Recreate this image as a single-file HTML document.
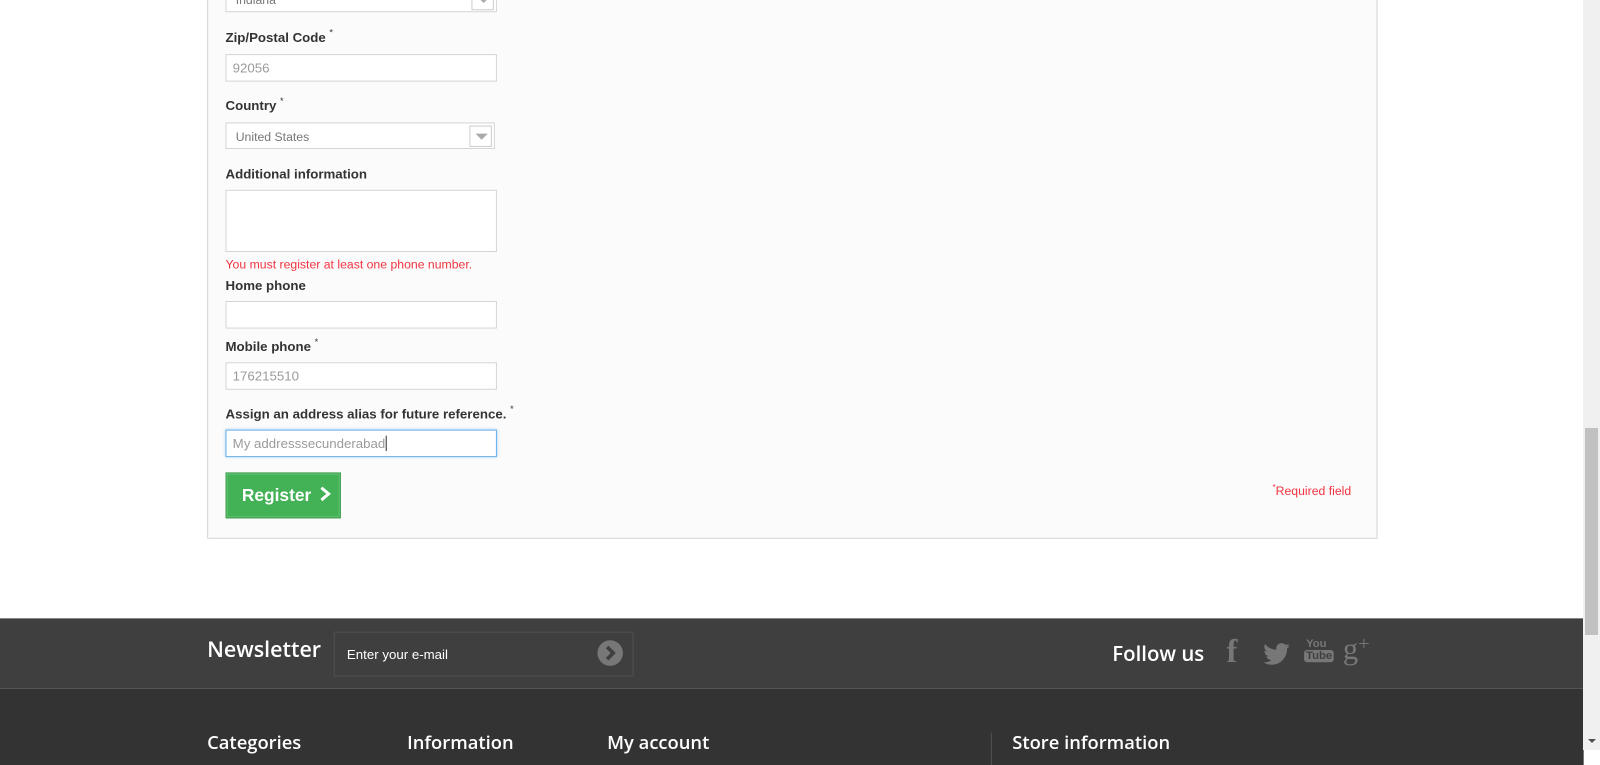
<!DOCTYPE html>
<html><head><style>
*{margin:0;padding:0;box-sizing:border-box}
body{width:1600px;height:750px;overflow:hidden;background:#fff;font-family:Arial,"Liberation Sans",sans-serif;position:relative}
.a{position:absolute}
#w{position:absolute;left:0;top:0;width:1568px;height:735px;transform:scale(1.0204);transform-origin:0 0}
.box{left:203px;top:-2px;width:1147px;height:530px;border:1px solid #d6d4d4;background:#fbfbfb}
.lbl{font-size:13px;font-weight:bold;color:#333}
.lbl sup{font-size:9px;font-weight:normal;position:relative;top:-2px;vertical-align:top}
.inp{background:#fff;border:1px solid #d6d4d4;width:266px;height:27px;font-size:13px;color:#9c9b9b;padding:5px 6px;line-height:16px}
.sel{font-size:12px;color:#777;padding:5px 9px}
.arr{position:absolute;right:2px;top:2px;width:22px;height:21px;border:1px solid #ccc;background:#fff}
.arr:after{content:"";position:absolute;left:5px;top:7px;border-left:6px solid transparent;border-right:6px solid transparent;border-top:6px solid #aaa}
.ft{font-family:"Open Sans","DejaVu Sans","Liberation Sans",sans-serif;color:#fff;font-weight:600}
</style></head><body>
<div id="w">
<div class="a box"></div>
<div class="a inp sel" style="left:221px;top:-14px;height:26px;">Indiana<div class="arr"></div></div>
<div class="a lbl" style="left:221px;top:29px">Zip/Postal Code <sup>*</sup></div>
<div class="a inp" style="left:221px;top:53px">92056</div>
<div class="a lbl" style="left:221px;top:96px">Country <sup>*</sup></div>
<div class="a inp sel" style="left:221px;top:120px;height:26px;width:264px">United States<div class="arr"></div></div>
<div class="a lbl" style="left:221px;top:163px">Additional information</div>
<div class="a inp" style="left:221px;top:186px;height:61px"></div>
<div class="a" style="left:221px;top:252px;font-size:12px;color:#f13340">You must register at least one phone number.</div>
<div class="a lbl" style="left:221px;top:272px">Home phone</div>
<div class="a inp" style="left:221px;top:295px"></div>
<div class="a lbl" style="left:221px;top:332px">Mobile phone <sup>*</sup></div>
<div class="a inp" style="left:221px;top:355px">176215510</div>
<div class="a lbl" style="left:221px;top:398px">Assign an address alias for future reference. <sup>*</sup></div>
<div class="a inp" style="left:221px;top:421px;border-color:#66afe9;box-shadow:0 0 3px rgba(102,175,233,.6)">My addresssecunderabad<span style="display:inline-block;width:1px;height:15px;background:#333;vertical-align:-3px"></span></div>
<div class="a" style="left:221px;top:463px;width:113px;height:45px;background:#43b155;border:1px solid #399a49;box-shadow:inset 0 0 0 1px #6bc77a;color:#fff;font-weight:bold;font-size:17px;line-height:43px;padding-left:15px">Register <svg width="12" height="16" viewBox="0 0 12 16" style="vertical-align:-1px;margin-left:3px"><path d="M2 2l7 6-7 6" stroke="#fff" stroke-width="3" fill="none"/></svg></div>
<div class="a" style="left:1247px;top:473px;font-size:12px;color:#f13340"><sup style="font-size:8px">*</sup>Required field</div>

<div class="a" style="left:0;top:606px;width:1552px;height:69px;background:#3f3f3f"></div>
<div class="a" style="left:0;top:675px;width:1552px;height:75px;background:#333"></div>
<div class="a ft" style="left:203px;top:623px;font-size:21px">Newsletter</div>
<div class="a" style="left:327px;top:619px;width:294px;height:44px;border:1px solid #515151;color:#fff;font-size:13px;padding:14px 12px">Enter your e-mail</div>
<svg class="a" style="left:585px;top:627px" width="26" height="26" viewBox="0 0 26 26"><circle cx="13" cy="13" r="12.5" fill="#777"/><path d="M10 7l6 6-6 6" stroke="#3f3f3f" stroke-width="3.5" fill="none"/></svg>
<div class="a ft" style="left:1090px;top:627px;font-size:20px">Follow us</div>
<div class="a" style="left:1202px;top:620px;font-family:'Liberation Serif',serif;font-weight:bold;font-size:32px;color:#777">f</div>
<svg class="a" style="left:1238px;top:630px" width="26" height="22" viewBox="0 0 24 20"><path d="M24 2.4c-.9.4-1.8.7-2.8.8 1-.6 1.8-1.6 2.2-2.7-1 .6-2 1-3.1 1.2C19.3.7 18 .1 16.6.1c-2.7 0-4.9 2.2-4.9 4.9 0 .4 0 .8.1 1.1C7.7 5.9 4.1 4 1.7 1 1.2 1.7 1 2.6 1 3.5c0 1.7.9 3.2 2.2 4.1-.8 0-1.6-.2-2.2-.6v.1c0 2.4 1.7 4.4 3.9 4.8-.4.1-.8.2-1.3.2-.3 0-.6 0-.9-.1.6 2 2.4 3.4 4.6 3.4-1.7 1.3-3.8 2.1-6.1 2.1-.4 0-.8 0-1.2-.1 2.2 1.4 4.8 2.2 7.5 2.2 9.1 0 14-7.5 14-14v-.6c1-.7 1.8-1.6 2.5-2.6z" fill="#777"/></svg>
<div class="a" style="left:1278px;top:626px;width:24px;font-family:'Liberation Sans Narrow',sans-serif;font-weight:bold;color:#777;font-size:11px;line-height:10px;text-align:center">You<br><span style="display:inline-block;background:#777;color:#3f3f3f;border-radius:3px;padding:1px 2px;margin-top:1px;font-size:11px">Tube</span></div>
<div class="a" style="left:1316px;top:620px;font-family:'Liberation Serif',serif;font-size:30px;color:#777">g<span style="font-size:20px;vertical-align:9px">+</span></div>
<div class="a ft" style="left:203px;top:716px;font-size:18px">Categories</div>
<div class="a ft" style="left:399px;top:716px;font-size:18px">Information</div>
<div class="a ft" style="left:595px;top:716px;font-size:18px">My account</div>
<div class="a" style="left:971px;top:718px;width:1px;height:32px;background:#515151"></div>
<div class="a ft" style="left:992px;top:716px;font-size:18px">Store information</div>
</div>
<div class="a" style="left:1583px;top:0;width:17px;height:750px;background:#f0f0f0"></div>
<div class="a" style="left:1585px;top:428px;width:13px;height:207px;background:#c1c1c1"></div>
<div class="a" style="left:1588px;top:739px;border-left:4px solid transparent;border-right:4px solid transparent;border-top:4px solid #505050"></div>
</body></html>
